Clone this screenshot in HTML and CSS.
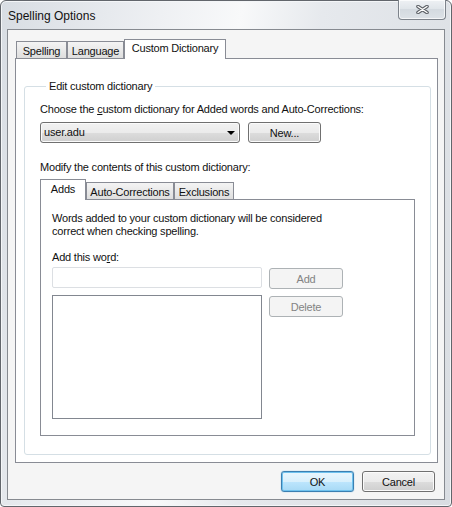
FILE: index.html
```html
<!DOCTYPE html>
<html lang="en">
<head>
    <meta charset="UTF-8">
    <title>Spelling Options</title>
    <link rel="stylesheet" href="styles.css">
</head>
<body>
    <div class="window">
        <div class="titlebar">
            <span class="title">Spelling Options</span>
            <button class="close" title="Close">
                <svg width="13" height="9" viewBox="0 0 13 9">
                    <path d="M2 1.5 L11 7.5 M11 1.5 L2 7.5" stroke="#5c6066" stroke-width="3.6" stroke-linecap="round"/>
                    <path d="M2 1.5 L11 7.5 M11 1.5 L2 7.5" stroke="#fff" stroke-width="1.4" stroke-linecap="round"/>
                </svg>
            </button>
        </div>

        <div class="client">
            <div class="tabs">
                <div class="tab tab-spelling">Spelling</div>
                <div class="tab tab-language">Language</div>
                <div class="tab tab-custom active">Custom Dictionary</div>
            </div>

            <div class="panel">
                <fieldset class="group">
                    <legend>Edit custom dictionary</legend>

                    <div class="label choose">Choose the <u>c</u>ustom dictionary for Added words and Auto-Corrections:</div>
                    <div class="combo-row">
                        <div class="combo">
                            <span>user.adu</span>
                            <span class="arrow"></span>
                        </div>
                        <button class="btn btn-new">New...</button>
                    </div>

                    <div class="label modify">Modify the contents of this custom dictionary:</div>

                    <div class="subtabs">
                        <div class="subtab active sub-adds">Adds</div>
                        <div class="subtab sub-auto">Auto-Corrections</div>
                        <div class="subtab sub-excl">Exclusions</div>
                    </div>
                    <div class="subpanel">
                        <div class="label">Words added to your custom dictionary will be considered<br>correct when checking spelling.</div>
                        <div class="label word-label">Add this wo<u>r</u>d:</div>
                        <div class="word-row">
                            <input type="text" class="word-input">
                            <button class="btn btn-side" disabled>Add</button>
                        </div>
                        <div class="word-row list-row">
                            <div class="word-list"></div>
                            <button class="btn btn-side" disabled>Delete</button>
                        </div>
                    </div>
                </fieldset>
            </div>

            <div class="footer">
                <button class="btn btn-ok">OK</button>
                <button class="btn btn-cancel">Cancel</button>
            </div>
        </div>
    </div>
</body>
</html>
```

FILE: styles.css
```css
html, body {
    margin: 0;
    padding: 0;
}
body {
    width: 452px;
    height: 507px;
    background: #fff;
    font-family: "Liberation Sans", Arial, sans-serif;
    font-size: 11px;
    letter-spacing: -0.2px;
    line-height: 13px;
    color: #111;
}
.window {
    box-sizing: border-box;
    width: 452px;
    height: 507px;
    border: 1px solid #62666c;
    border-radius: 6px 6px 4px 4px;
    background: linear-gradient(100deg, #d8dde3 0%, #eef0f3 30%, #f8f9fa 45%, #e6e9ed 60%, #d9dde2 100%);
    box-shadow: inset 0 0 0 1px #f4f6f8;
    display: flex;
    flex-direction: column;
    padding: 0 6px 6px 6px;
}
.titlebar {
    height: 28px;
    display: flex;
    justify-content: space-between;
    align-items: center;
    padding-left: 1px;
}
.title {
    font-size: 12px;
    letter-spacing: 0;
    padding-top: 2px;
}
.close {
    align-self: flex-start;
    margin-top: -1px;
    margin-right: -1px;
    width: 48px;
    height: 20px;
    padding: 0;
    border: 1px solid #7d838b;
    border-top: none;
    border-radius: 0 0 4px 4px;
    background: linear-gradient(#eef1f4, #dfe4e9 50%, #d4dae0 50%, #dde2e7);
    box-shadow: inset 0 0 0 1px rgba(255, 255, 255, 0.7);
    display: flex;
    align-items: center;
    justify-content: center;
}

.client {
    flex: 1;
    display: flex;
    flex-direction: column;
    border: 1px solid #868a90;
    background: #f5f5f5;
    padding: 9px 6px 7px 7px;
}

/* outer tabs */
.tabs {
    display: flex;
    align-items: flex-end;
    height: 19px;
    padding-left: 1px;
}
.tab {
    box-sizing: border-box;
    height: 17px;
    border: 1px solid #898c95;
    border-bottom: none;
    background: linear-gradient(#f4f4f4, #e9e9e9 50%, #dedede);
    text-align: center;
    line-height: 16px;
    padding-top: 1px;
}
.tab.active {
    position: relative;
    z-index: 1;
    height: 20px;
    margin-bottom: -1px;
    background: #fff;
    line-height: 17px;
    padding-top: 0;
}
.tab-spelling { width: 51px; }
.tab-language { width: 57px; }
.tab-custom { width: 102px; }

.panel {
    flex: 1;
    border: 1px solid #898c95;
    background: #fff;
    display: flex;
    flex-direction: column;
}

.group {
    margin: 21px 6px 7px 8px;
    padding: 0 15px 18px 15px;
    border: 1px solid #d5dfe5;
    border-radius: 3px;
    min-width: 0;
}
.group legend {
    margin-left: 6px;
    padding: 0 3px;
    line-height: 13px;
}
.choose {
    margin-top: 10px;
}
.combo-row {
    display: flex;
    gap: 8px;
    margin-top: 6px;
}
.combo {
    box-sizing: border-box;
    width: 200px;
    height: 21px;
    border: 1px solid #707070;
    border-radius: 3px;
    background: linear-gradient(#f2f2f2 0%, #ebebeb 50%, #dddddd 50%, #cfcfcf 100%);
    box-shadow: inset 0 0 0 1px #fbfbfb;
    display: flex;
    justify-content: space-between;
    align-items: center;
    padding: 0 3px 0 3px;
}
.arrow {
    width: 0;
    height: 0;
    border-left: 4px solid transparent;
    border-right: 4px solid transparent;
    border-top: 4px solid #000;
    margin-right: 1px;
}
.modify {
    margin-top: 18px;
}

/* inner tabs */
.subtabs {
    display: flex;
    align-items: flex-end;
    height: 20px;
    margin-top: 5px;
}
.subtab {
    box-sizing: border-box;
    height: 17px;
    border: 1px solid #898c95;
    border-bottom: none;
    background: linear-gradient(#f4f4f4, #e9e9e9 50%, #dedede);
    text-align: center;
    line-height: 16px;
    padding-top: 1px;
}
.subtab.active {
    position: relative;
    z-index: 1;
    height: 21px;
    margin-bottom: -1px;
    background: #fff;
    line-height: 17px;
    padding-top: 1px;
}
.sub-adds { width: 46px; }
.sub-auto { width: 88px; }
.sub-excl { width: 60px; }

.subpanel {
    box-sizing: border-box;
    height: 237px;
    border: 1px solid #898c95;
    padding: 12px 11px;
}
.word-label {
    margin-top: 13px;
}
.word-row {
    display: flex;
    gap: 7px;
    align-items: flex-start;
    margin-top: 3px;
}
.list-row {
    margin-top: 6px;
}
.word-input {
    box-sizing: border-box;
    width: 210px;
    height: 21px;
    margin: 0;
    border: 1px solid #dcdfe3;
    border-radius: 2px;
    background: #fff;
    outline: none;
}
.word-list {
    box-sizing: border-box;
    width: 210px;
    height: 124px;
    border: 1px solid #828790;
    background: #fff;
}

/* buttons */
.btn {
    box-sizing: border-box;
    height: 21px;
    margin: 0;
    padding: 0;
    border: 1px solid #707070;
    border-radius: 3px;
    background: linear-gradient(#f2f2f2 0%, #ebebeb 50%, #dddddd 50%, #cfcfcf 100%);
    box-shadow: inset 0 0 0 1px #fbfbfb;
    font-family: inherit;
    font-size: 11px;
    letter-spacing: -0.2px;
    color: #111;
}
.btn-new {
    width: 73px;
}
.btn-side {
    width: 74px;
    margin-top: 1px;
}
.btn:disabled {
    border-color: #adb2b5;
    background: #f4f4f4;
    box-shadow: none;
    color: #838383;
}
.footer {
    display: flex;
    justify-content: flex-end;
    gap: 8px;
    margin-top: 8px;
    padding-right: 3px;
}
.btn-ok,
.btn-cancel {
    width: 73px;
}
.btn-ok {
    border-color: #3c7fb1;
    background: linear-gradient(#eaf6fd 0%, #d9f0fc 50%, #bee6fd 50%, #a7d9f5 100%);
    box-shadow: inset 0 0 0 1px #6fc2ee, 0 0 1px #48a4d8;
}
```
